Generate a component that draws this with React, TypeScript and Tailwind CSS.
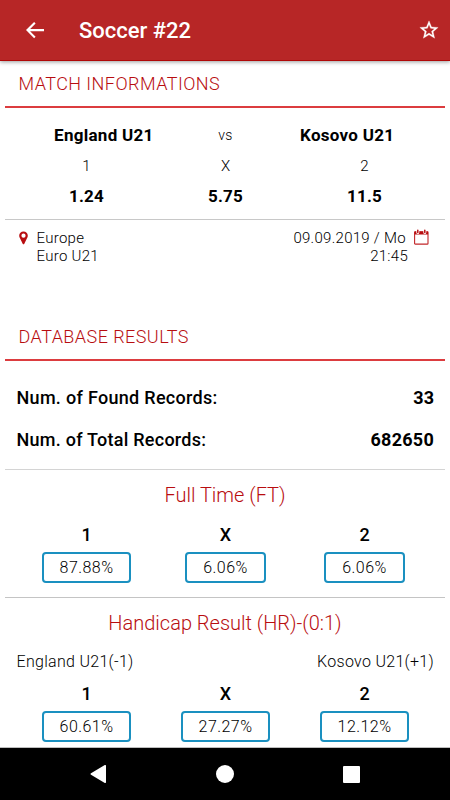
import type { ReactNode } from 'react';

interface Outcome {
    label: string;
    value: string;
}

const odds: Outcome[] = [
    { label: '1', value: '1.24' },
    { label: 'X', value: '5.75' },
    { label: '2', value: '11.5' },
];

const fullTime: Outcome[] = [
    { label: '1', value: '87.88%' },
    { label: 'X', value: '6.06%' },
    { label: '2', value: '6.06%' },
];

const handicap: Outcome[] = [
    { label: '1', value: '60.61%' },
    { label: 'X', value: '27.27%' },
    { label: '2', value: '12.12%' },
];

const BackIcon = () => (
    <svg className="w-6 h-6" viewBox="0 0 24 24" fill="white">
        <path d="M21 11.1H7.1l5.5-5.5-1.5-1.5L3 12.1l8.1 8.1 1.5-1.5-5.5-5.5H21z" />
    </svg>
);

const StarIcon = () => (
    <svg className="w-[22px] h-[22px]" viewBox="0 0 24 24" fill="white" stroke="white" strokeWidth="0.3">
        <path d="M22 9.24l-7.19-.62L12 2 9.19 8.63 2 9.24l5.46 4.73L5.82 21 12 17.27 18.18 21l-1.63-7.03L22 9.24zM12 15.4l-3.76 2.27 1-4.28-3.32-2.88 4.38-.38L12 6.1l1.71 4.04 4.38.38-3.32 2.88 1 4.28L12 15.4z" />
    </svg>
);

const PinIcon = () => (
    <svg className="w-[9px] h-[14px]" viewBox="0 0 9 14" fill="#b80d10">
        <path
            fillRule="evenodd"
            d="M4.5.5C2 .5.2 2.3.2 4.7c0 1 .3 1.6.7 2.4l2.9 5.8c.3.6 1.1.6 1.4 0l2.9-5.8c.4-.8.7-1.4.7-2.4C8.8 2.3 7 .5 4.5.5zm0 2.1a2.1 2.1 0 1 1 0 4.2 2.1 2.1 0 0 1 0-4.2z"
        />
    </svg>
);

const CalendarIcon = () => (
    <svg className="w-[15px] h-[16px]" viewBox="0 0 15 16" fill="none">
        <rect x="0.6" y="2.7" width="13.4" height="12.4" rx="0.7" stroke="#c2272a" strokeWidth="1.1" />
        <path d="M.5 2.5h13.6v3H.5z" fill="#b80d10" />
        <path d="M3.8 1.3v2.2M10.8 1.3v2.2" stroke="white" strokeWidth="3" strokeLinecap="round" />
        <path d="M3.8 1.3v2.2M10.8 1.3v2.2" stroke="#b80d10" strokeWidth="1.5" strokeLinecap="round" />
    </svg>
);

const SectionTitle = ({ children }: { children: ReactNode }) => (
    <div className="h-[47px] mx-[5px] pl-[13.5px] flex items-center border-b-2 border-[#dc3c3f]">
        <h2 className="text-[18px] leading-none font-light tracking-[0.45px] text-[#b80d10]">{children}</h2>
    </div>
);

const GroupTitle = ({ children }: { children: ReactNode }) => (
    <h3 className="h-[30px] flex items-center justify-center text-[20px] font-light text-[#b80d10]">{children}</h3>
);

const OutcomeRow = ({ items }: { items: Outcome[] }) => (
    <div className="grid grid-cols-3 pl-[17px] pr-4">
        {items.map((item) => (
            <div key={item.label} className="flex flex-col items-center">
                <span className="h-9 flex items-center text-[18px] font-medium">{item.label}</span>
                <span className="h-[31px] px-4 flex items-center border-2 border-[#1a90c0] rounded-[4px] text-[16px] font-light tracking-[0.45px]">
                    {item.value}
                </span>
            </div>
        ))}
    </div>
);

export default function App() {
    return (
        <div className="w-[450px] h-[800px] flex flex-col overflow-hidden bg-white text-black font-['Roboto',sans-serif]">
            <header className="h-[61px] shrink-0 relative z-10 flex items-center pl-[23px] pr-[10.5px] bg-[#b72626] border-b border-[#b00808] shadow-[0_1px_4px_rgba(0,0,0,0.4)]">
                <BackIcon />
                <h1 className="ml-8 flex-1 pt-px text-[22px] font-medium text-white">Soccer #22</h1>
                <StarIcon />
            </header>

            <main className="flex-1 min-h-0 overflow-hidden border-b border-[#bdbdbd]">
                <SectionTitle>MATCH INFORMATIONS</SectionTitle>
                <div className="h-[111px] pt-[13px] pl-[17px] pr-4">
                    <div className="h-[29px] mx-[26px] grid grid-cols-3 items-center text-center whitespace-nowrap">
                        <span className="text-[17px] font-bold tracking-[0.28px]">England U21</span>
                        <span className="text-[14px] font-light tracking-[0.4px]">vs</span>
                        <span className="text-[17px] font-bold tracking-[0.28px]">Kosovo U21</span>
                    </div>
                    <div className="grid grid-cols-3 text-center">
                        {odds.map((odd) => (
                            <div key={odd.label}>
                                <div className="h-8 leading-8 text-[15px] font-light">{odd.label}</div>
                                <div className="h-7 leading-7 text-[17px] font-bold tracking-[0.25px]">{odd.value}</div>
                            </div>
                        ))}
                    </div>
                </div>
                <div className="mx-[5px] h-[95px] pt-[9px] pl-[13.5px] pr-4 flex border-t border-[#c8c8c8] text-[15px] leading-[18px] font-light tracking-[0.28px]">
                    <div className="pt-[2px]">
                        <PinIcon />
                    </div>
                    <div className="ml-[9px] flex-1">
                        <div>Europe</div>
                        <div>Euro U21</div>
                    </div>
                    <div className="text-right">
                        <div className="pr-[2px]">09.09.2019 / Mo</div>
                        <div>21:45</div>
                    </div>
                    <div className="ml-[6px]">
                        <CalendarIcon />
                    </div>
                </div>

                <SectionTitle>DATABASE RESULTS</SectionTitle>
                <div className="h-[108px] pt-[15px] pl-[16.5px] pr-4 text-[18px]">
                    <div className="h-[42px] flex items-center justify-between">
                        <span className="font-medium tracking-[0.3px]">Num. of Found Records:</span>
                        <span className="font-bold">33</span>
                    </div>
                    <div className="h-[42px] flex items-center justify-between">
                        <span className="font-medium tracking-[0.25px]">Num. of Total Records:</span>
                        <span className="font-bold tracking-[0.25px]">682650</span>
                    </div>
                </div>

                <section className="h-[128px]">
                    <div className="mx-[5px] mb-[10px] border-t border-[#d4d4d4]" />
                    <GroupTitle>Full Time (FT)</GroupTitle>
                    <div className="h-[6px]" />
                    <OutcomeRow items={fullTime} />
                </section>

                <section>
                    <div className="mx-[5px] mb-[10px] border-t border-[#c4c4c4]" />
                    <GroupTitle>Handicap Result (HR)-(0:1)</GroupTitle>
                    <div className="h-[37px] pt-[13px] pl-[16.5px] pr-4 flex justify-between text-[16px] leading-[22px] font-light tracking-[0.3px]">
                        <span>England U21(-1)</span>
                        <span>Kosovo U21(+1)</span>
                    </div>
                    <OutcomeRow items={handicap} />
                </section>
            </main>

            <nav className="h-[52px] shrink-0 flex items-center pl-[90px] bg-black">
                <svg className="w-4 h-[18px]" viewBox="0 0 16 18" fill="white">
                    <path d="M14.8.1 1 8.2c-.6.4-.6 1.1 0 1.5l13.8 8.2c.6.3 1.2 0 1.2-.6V.7c0-.6-.6-.9-1.2-.6z" />
                </svg>
                <span className="ml-[110px] mr-[109px] w-[18px] h-[18px] rounded-full bg-white" />
                <span className="w-[17px] h-[17px] rounded-[1px] bg-white" />
            </nav>
        </div>
    );
}
